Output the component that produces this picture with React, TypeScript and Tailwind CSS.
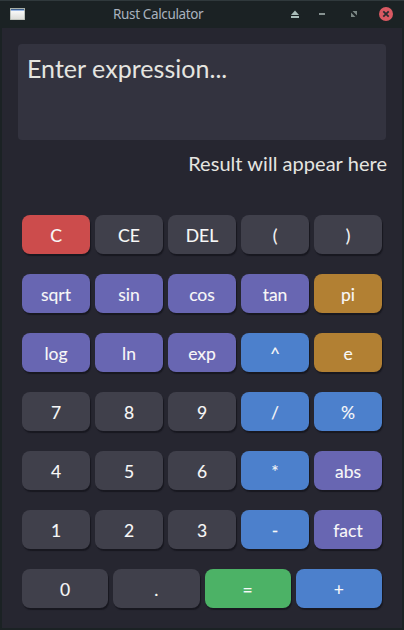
type Tone = "gray" | "red" | "purple" | "gold" | "blue" | "green";

const tones: Record<Tone, string> = {
  gray: "bg-[#40404b]",
  red: "bg-[#cc4c4c]",
  purple: "bg-[#6866b2]",
  gold: "bg-[#b28033]",
  blue: "bg-[#4c80cc]",
  green: "bg-[#4cb266]",
};

const rows: [string, Tone][][] = [
  [["C", "red"], ["CE", "gray"], ["DEL", "gray"], ["(", "gray"], [")", "gray"]],
  [["sqrt", "purple"], ["sin", "purple"], ["cos", "purple"], ["tan", "purple"], ["pi", "gold"]],
  [["log", "purple"], ["ln", "purple"], ["exp", "purple"], ["^", "blue"], ["e", "gold"]],
  [["7", "gray"], ["8", "gray"], ["9", "gray"], ["/", "blue"], ["%", "blue"]],
  [["4", "gray"], ["5", "gray"], ["6", "gray"], ["*", "blue"], ["abs", "purple"]],
  [["1", "gray"], ["2", "gray"], ["3", "gray"], ["-", "blue"], ["fact", "purple"]],
  [["0", "gray"], [".", "gray"], ["=", "green"], ["+", "blue"]],
];

function TitleBar() {
  return (
    <header className="flex h-7 items-center border-t border-[#30393c] bg-[#1b2224] pr-[11px] pl-[10px]">
      <svg width="15" height="12" viewBox="0 0 15 12" className="mt-[-1px] shrink-0">
        <defs>
          <linearGradient id="pane" x1="0" y1="0" x2="0" y2="1">
            <stop offset="0" stopColor="#f8f8f8" />
            <stop offset="1" stopColor="#dcdcd8" />
          </linearGradient>
        </defs>
        <rect width="15" height="12" fill="#a9b0a8" />
        <rect x="0.7" y="3" width="13.6" height="8.5" fill="url(#pane)" />
        <rect x="1" y="1" width="13" height="1" fill="#40618f" />
        <rect x="1" y="2" width="13" height="1" fill="#9db9e4" />
      </svg>
      <h1 className="ml-[88px] w-[91px] whitespace-nowrap font-['Noto_Sans',sans-serif] text-[13.5px] leading-none tracking-[-0.36px] text-[#a9b2bf]">
        Rust Calculator
      </h1>
      <svg width="104" height="14" viewBox="0 0 104 14" className="mt-[-1px] mr-[-1px] ml-auto shrink-0">
        <path d="M5 3.5 9 8H1Z" fill="#a9bdb9" />
        <rect x="1" y="9" width="8" height="2" fill="#a9bdb9" />
        <rect x="29" y="6" width="6" height="2" fill="#879291" />
        <path d="M62.5 4H67v4.5ZM61 5.5V10h4.5Z" fill="#7b8785" />
        <circle cx="96" cy="7" r="7" fill="#d95962" />
        <path d="m93.3 4.3 5.4 5.4m0-5.4-5.4 5.4" stroke="#292c30" strokeWidth="1.8" />
      </svg>
    </header>
  );
}

export default function App() {
  return (
    <div className="flex h-[630px] w-[404px] flex-col bg-[#1b2224] font-[Lato,sans-serif]">
      <TitleBar />
      <main className="mx-[2px] mb-[2px] flex flex-1 flex-col bg-[#262630] px-4 pt-4">
        <div className="h-24 w-[368px] rounded-[4px] bg-[#33333f] px-[9px] pt-2 text-[25px] leading-8 tracking-[0.03px] text-[#e5e5e0]">
          Enter expression...
        </div>
        <div className="mt-[7px] w-[369px] text-right text-[20px] leading-8 tracking-[0.04px] text-[#e5e5e0]">
          Result will appear here
        </div>
        <div className="mx-1 mt-9 flex w-[360px] flex-col gap-5">
          {rows.map((row, i) => (
            <div key={i} className="flex gap-[5px]">
              {row.map(([label, tone]) => (
                <button
                  key={label}
                  className={`h-[39px] min-w-0 flex-1 basis-0 rounded-[8px] pt-[3px] pb-px text-[17.5px] leading-none text-[#f8f8f8] [-webkit-text-stroke:0.1px] shadow-[1px_2px_1px_#181820] ${tones[tone]}`}
                >
                  {label}
                </button>
              ))}
            </div>
          ))}
        </div>
      </main>
    </div>
  );
}
